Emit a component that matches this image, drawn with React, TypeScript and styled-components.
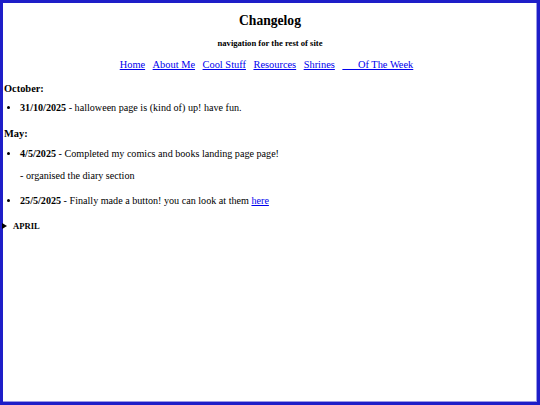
import React from "react";
import styled, { createGlobalStyle } from "styled-components";

const Global = createGlobalStyle`
  html, body { margin: 0; padding: 0; background: #ffffff; }
  body, body * { font-family: "Liberation Serif", "Times New Roman", serif; color: #000; }
`;

const Page = styled.div`
  box-sizing: border-box;
  min-height: 100vh;
  border: 3px solid #1e1ec8;
  box-shadow: inset -1px -1px 0 #9a9ae6;
  padding: 0 1px;
  font-family: "Liberation Serif", serif;
  font-size: 10.15px;
`;

const Title = styled.h1`
  margin: 10px 0 0;
  font-size: 13.6px;
  line-height: 16px;
  font-weight: bold;
  text-align: center;
`;

const Subtitle = styled.h5`
  margin: 9px 0 0;
  font-size: 8.6px;
  line-height: 10px;
  font-weight: bold;
  text-align: center;
`;

const Nav = styled.nav`
  margin-top: 10px;
  display: flex;
  justify-content: center;
  gap: 7.5px;
  font-size: 10.4px;
  line-height: 14px;
  padding-right: 7px;
`;

const Link = styled.a`
  && { color: #0000ee; }
  text-decoration: underline;
  white-space: pre;
`;

const Month = styled.h4<{ $gap: number }>`
  margin: ${(p) => p.$gap}px 0 0;
  font-size: 10.4px;
  line-height: 14px;
  font-weight: bold;
`;

const List = styled.ul`
  margin: 0;
  padding-left: 16px;
  list-style: disc;
`;

const Item = styled.li<{ $gap: number }>`
  margin-top: ${(p) => p.$gap}px;
  line-height: 14px;
`;

const Note = styled.p`
  margin: 8px 0 0;
  line-height: 14px;
`;

const Summary = styled.div`
  margin: 12px 0 0 -2px;
  display: flex;
  align-items: center;
  gap: 6px;
  font-size: 8.6px;
  line-height: 12px;
  font-weight: bold;
`;

const Arrow = styled.span`
  width: 0;
  height: 0;
  border-top: 3.5px solid transparent;
  border-bottom: 3.5px solid transparent;
  border-left: 5px solid #000;
`;

export default function App() {
  const links = ["Home", "About Me", "Cool Stuff", "Resources", "Shrines", "\u00a0\u00a0\u00a0\u00a0\u00a0\u00a0Of The Week"];
  return (
    <>
      <Global />
      <Page>
        <Title>Changelog</Title>
        <Subtitle>navigation for the rest of site</Subtitle>
        <Nav>
          {links.map((l) => (
            <Link key={l} href="#">{l}</Link>
          ))}
        </Nav>
        <Month $gap={10}>October:</Month>
        <List>
          <Item $gap={5}>
            <b>31/10/2025</b> - halloween page is (kind of) up! have fun.
          </Item>
        </List>
        <Month $gap={12}>May:</Month>
        <List>
          <Item $gap={6}>
            <b>4/5/2025</b> - Completed my comics and books landing page page!
            <Note>- organised the diary section</Note>
          </Item>
          <Item $gap={11}>
            <b>25/5/2025</b> - Finally made a button! you can look at them <Link href="#">here</Link>
          </Item>
        </List>
        <Summary>
          <Arrow />
          <span>APRIL</span>
        </Summary>
      </Page>
    </>
  );
}
